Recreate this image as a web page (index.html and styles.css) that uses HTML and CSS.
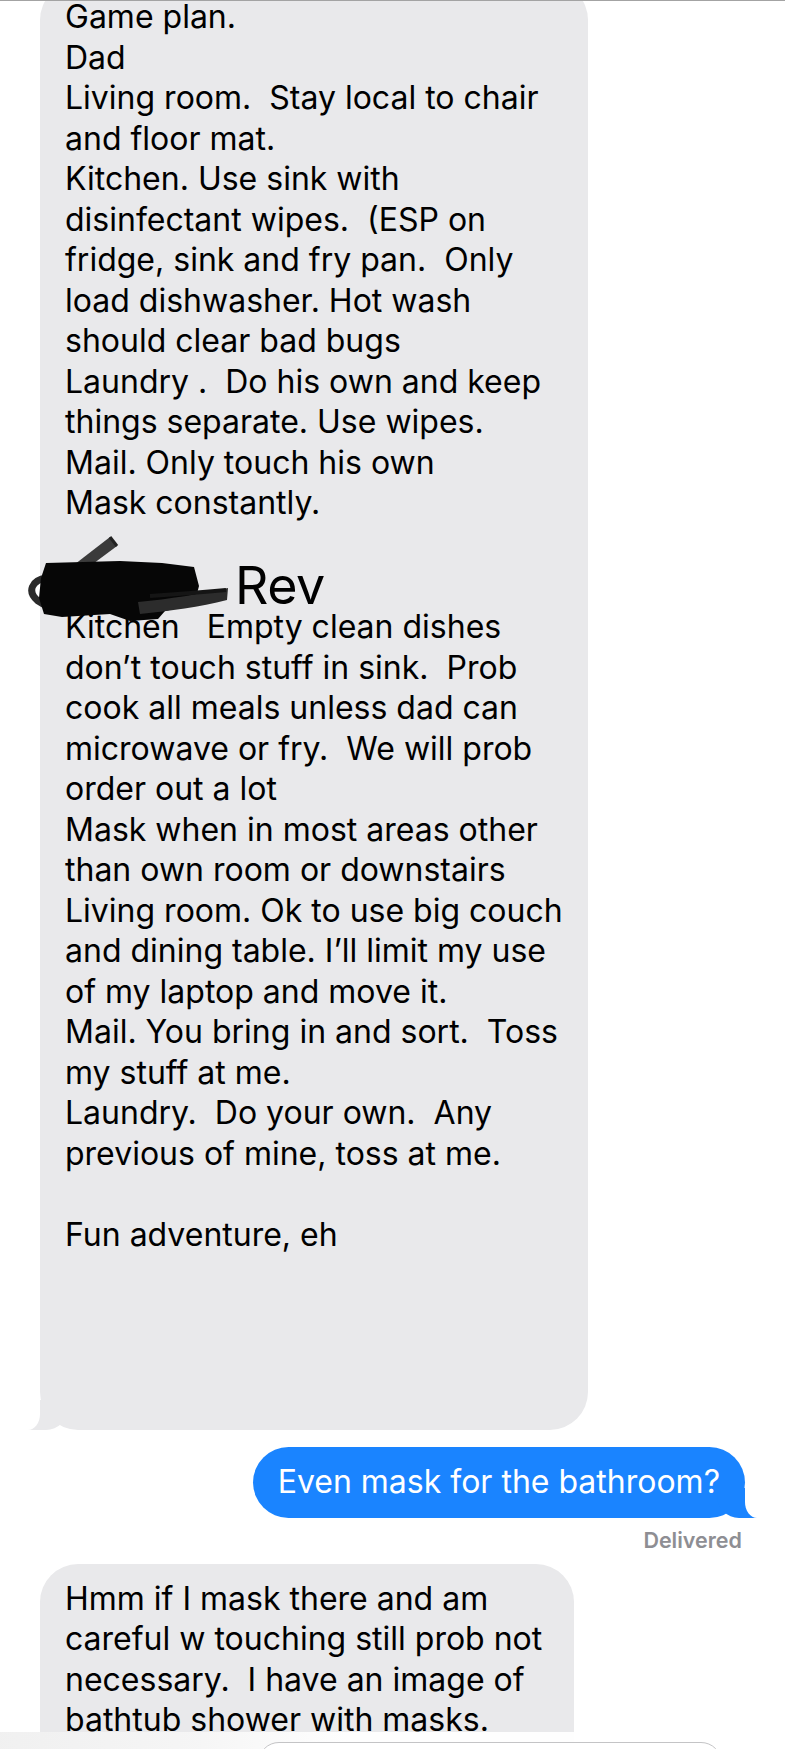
FILE: index.html
```html
<!DOCTYPE html>
<html lang="en">
<head>
<meta charset="utf-8">
<title>Messages</title>
<link rel="stylesheet" href="styles.css">
</head>
<body>
<div class="topline"></div>
<main class="thread">
  <div class="row in">
    <div class="bubble gray tail long">
<div class="text">Game plan.
Dad
Living room.  Stay local to chair
and floor mat.
Kitchen. Use sink with
disinfectant wipes.  (ESP on
fridge, sink and fry pan.  Only
load dishwasher. Hot wash
should clear bad bugs
Laundry .  Do his own and keep
things separate. Use wipes.
Mail. Only touch his own
Mask constantly.</div>
<div class="rev-line"><span class="rev">Rev</span></div>
<div class="text">Kitchen   Empty clean dishes
don’t touch stuff in sink.  Prob
cook all meals unless dad can
microwave or fry.  We will prob
order out a lot
Mask when in most areas other
than own room or downstairs
Living room. Ok to use big couch
and dining table. I’ll limit my use
of my laptop and move it.
Mail. You bring in and sort.  Toss
my stuff at me.
Laundry.  Do your own.  Any
previous of mine, toss at me.
&#8203;
Fun adventure, eh</div>
      <svg class="redact" viewBox="28 528 202 96" width="202" height="96" aria-hidden="true">
        <path d="M57 578 L110 537 L117 546 L66 584 Z" fill="#3b3b3b"/>
        <path d="M110 537 L117 546" stroke="#222" stroke-width="3"/>
        <path d="M47 578 C31 580 27 592 38 601 C46 607 58 609 72 607" stroke="#2a2a2a" stroke-width="7" fill="none"/>
        <path d="M46 563 L120 561 L162 563 L194 567 L199 586 L194 605 L165 611 L158 619 L130 621 L110 614 L62 617 L44 614 L39 598 L41 578 Z" fill="#060606"/>
        <path d="M138 602 C170 599 200 594 228 588 L227 600 C200 607 170 611 140 614 Z" fill="#2c2c2c"/>
        <path d="M150 596 C180 594 205 592 226 590" stroke="#151515" stroke-width="4" fill="none"/>
      </svg>
    </div>
  </div>

  <div class="row out">
    <div class="bubble blue tail">
      <div class="text">Even mask for the bathroom?</div>
    </div>
  </div>
  <div class="status">Delivered</div>

  <div class="row in">
    <div class="bubble gray narrow">
<div class="text">Hmm if I mask there and am
careful w touching still prob not
necessary.  I have an image of
bathtub shower with masks.
</div>
    </div>
  </div>
</main>
<div class="composer">
  <div class="field"></div>
</div>
</body>
</html>
```

FILE: styles.css
```css
html, body {
  margin: 0;
  padding: 0;
  background: #ffffff;
}

body {
  width: 785px;
  height: 1749px;
  overflow: hidden;
  position: relative;
  font-family: "Inter", "Roboto", "Liberation Sans", sans-serif;
  color: #000;
}

.topline {
  position: absolute;
  top: 0;
  left: 0;
  right: 0;
  height: 1px;
  background: #a3a3a3;
  z-index: 5;
}

.thread {
  display: flex;
  flex-direction: column;
  margin-top: -18px;
}

.row {
  display: flex;
}

.row.in {
  justify-content: flex-start;
  padding-left: 40px;
}

.row.out {
  justify-content: flex-end;
  padding-right: 40px;
  margin-top: 17px;
}

.bubble {
  position: relative;
  box-sizing: border-box;
  padding: 15px 25px;
  border-radius: 38px;
  font-size: 32px;
  line-height: 40.5px;
  letter-spacing: 0;
}

.bubble .text {
  position: relative;
  z-index: 1;
  white-space: pre-wrap;
}

.gray {
  background: #e9e9eb;
  color: #000;
}

.gray.long {
  width: 548px;
  padding-bottom: 175px;
}

.gray.narrow {
  width: 534px;
  margin-top: 11px;
  padding-bottom: 40px;
}

.blue {
  background: #1a84ff;
  color: #fff;
  padding: 15px 25px;
  border-radius: 36px;
}

/* tails */
.gray.tail::before,
.gray.tail::after,
.blue.tail::before,
.blue.tail::after {
  content: "";
  position: absolute;
  bottom: 0;
  height: 30px;
}

.gray.tail::before {
  left: -12px;
  width: 40px;
  background: #e9e9eb;
  border-bottom-right-radius: 22px;
}

.gray.tail::after {
  left: -12px;
  width: 12px;
  background: #fff;
  border-bottom-right-radius: 12px 16px;
}

.blue.tail::before {
  right: -12px;
  width: 40px;
  background: #1a84ff;
  border-bottom-left-radius: 22px;
}

.blue.tail::after {
  right: -12px;
  width: 12px;
  background: #fff;
  border-bottom-left-radius: 12px 16px;
}

.rev-line {
  height: 43px;
  margin-top: 40.5px;
  line-height: 43px;
  white-space: nowrap;
}

.rev {
  margin-left: 170px;
  font-size: 52px;
  letter-spacing: -0.5px;
}

.redact {
  position: absolute;
  left: -12px;
  top: 546px;
  z-index: 2;
}

.status {
  align-self: flex-end;
  margin-right: 43px;
  margin-top: 10px;
  font-size: 21.5px;
  line-height: 25px;
  font-weight: 600;
  color: #8e8e93;
}

.composer {
  position: absolute;
  left: 0;
  right: 0;
  bottom: 0;
  height: 17px;
  box-sizing: border-box;
  padding: 10px 63px 0 258px;
  overflow: hidden;
  background: linear-gradient(to right, rgba(240,240,240,0.97) 0%, rgba(246,246,246,0.97) 25%, rgba(255,255,255,0.97) 45%);
  z-index: 6;
}

.field {
  height: 40px;
  border: 1.5px solid #c4c4c6;
  border-radius: 21px;
  background: #fff;
}
```
